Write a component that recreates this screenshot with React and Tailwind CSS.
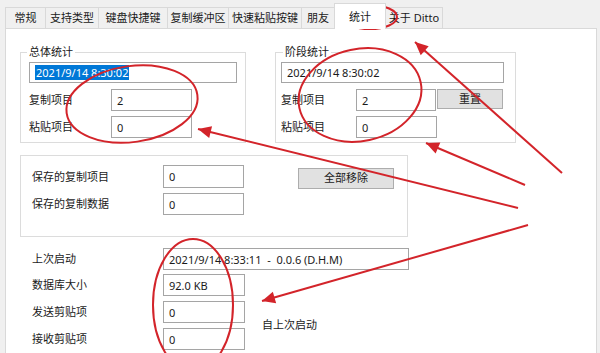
import React from 'react';

const FONT = { fontFamily: '"Noto Sans", "Noto Sans CJK SC", sans-serif' };

const TABS = [
  { label: '常规', w: 'w-[41px]' },
  { label: '支持类型', w: 'w-[54px]' },
  { label: '键盘快捷键', w: 'w-[70px]' },
  { label: '复制缓冲区', w: 'w-[62px]' },
  { label: '快速粘贴按键', w: 'w-[74px]' },
  { label: '朋友', w: 'w-[34px]' },
  { label: '统计', w: 'w-[52px]', active: true },
  { label: '关于 Ditto', w: 'w-[58px]' },
];

const RED = '#d3242a';

// arrow head: returns polygon points for a line ending at (x2, y2)
function head(x1, y1, x2, y2, len = 13, half = 6) {
  const dx = x2 - x1;
  const dy = y2 - y1;
  const d = Math.hypot(dx, dy);
  const ux = dx / d;
  const uy = dy / d;
  const bx = x2 - ux * len;
  const by = y2 - uy * len;
  return `${x2},${y2} ${bx - uy * half},${by + ux * half} ${bx + uy * half},${by - ux * half}`;
}

const ARROWS = [
  [562, 173, 415, 42],
  [518, 208, 198, 129],
  [525, 185, 426, 143],
  [528, 225, 262, 301],
];

function Field({ w, h = 'h-[22px]', children, className = '' }) {
  return (
    <div className={`${w} ${h} border border-[#a5a5a5] bg-white flex items-center pl-[5px] text-[11px] text-[#1a1a1a] leading-none shrink-0 ${className}`}>
      {children}
    </div>
  );
}

function Button({ w, h, children, className = '' }) {
  return (
    <div className={`${w} ${h} border border-[#adadad] bg-[#e1e1e1] flex items-center justify-center text-[11px] text-[#1a1a1a] shrink-0 ${className}`}>
      {children}
    </div>
  );
}

function Annotations() {
  return (
    <svg className="absolute inset-0 pointer-events-none" width="600" height="353" viewBox="0 0 600 353">
      <g fill="none" stroke={RED} strokeWidth="2">
        <ellipse cx="370" cy="17" rx="27" ry="12" />
        <ellipse cx="132" cy="104" rx="66" ry="38" transform="rotate(-8 132 104)" />
        <ellipse cx="360" cy="95" rx="62" ry="46" transform="rotate(-12 360 95)" />
        <ellipse cx="193" cy="305" rx="40" ry="66" />
        {ARROWS.map(([x1, y1, x2, y2], i) => (
          <line key={i} x1={x1} y1={y1} x2={x2} y2={y2} />
        ))}
      </g>
      <g fill={RED}>
        {ARROWS.map(([x1, y1, x2, y2], i) => (
          <polygon key={i} points={head(x1, y1, x2, y2)} />
        ))}
      </g>
    </svg>
  );
}

export default function App() {
  return (
    <div className="relative w-[600px] h-[353px] overflow-hidden bg-[#f0f0f0]" style={FONT}>
      {/* tab strip */}
      <div className="flex items-end h-[28px] pl-[5px]">
        {TABS.map(t =>
          t.active ? (
            <div
              key={t.label}
              className={`${t.w} h-[26px] -ml-px mb-[-1px] relative z-10 bg-white border border-b-0 border-[#d9d9d9] flex items-start justify-center pt-[5px] text-[11px] text-[#1a1a1a]`}
            >
              {t.label}
            </div>
          ) : (
            <div
              key={t.label}
              className={`${t.w} h-[21px] -ml-px first:ml-0 bg-[#f0f0f0] border border-b-0 border-[#d9d9d9] flex items-center justify-center text-[11px] text-[#1a1a1a] whitespace-nowrap`}
            >
              {t.label}
            </div>
          )
        )}
      </div>

      {/* panel */}
      <div className="ml-[5px] w-[592px] h-[340px] bg-white border border-[#d9d9d9] pl-[14px]">
        <div className="flex gap-[29px] mt-[16px]">
          {/* 总体统计 */}
          <fieldset className="w-[226px] h-[98px] border border-[#dcdcdc] pl-[8px] pt-[3px]">
            <legend className="-ml-[2px] px-[2px] text-[11px] leading-[14px] text-[#1a1a1a]">总体统计</legend>
            <Field w="w-[208px]" h="h-[21px]" className="border-[#0078d7] pl-[3px]">
              <span className="bg-[#0078d7] text-white px-[1px] py-[2px]">2021/9/14 8:30:02</span>
            </Field>
            <div className="flex items-center mt-[6px]">
              <span className="w-[82px] text-[11px] text-[#1a1a1a]">复制项目</span>
              <Field w="w-[81px]">2</Field>
            </div>
            <div className="flex items-center mt-[5px]">
              <span className="w-[82px] text-[11px] text-[#1a1a1a]">粘贴项目</span>
              <Field w="w-[81px]">0</Field>
            </div>
          </fieldset>

          {/* 阶段统计 */}
          <fieldset className="w-[241px] h-[98px] border border-[#dcdcdc] pl-[5px] pt-[3px]">
            <legend className="ml-[2px] px-[2px] text-[11px] leading-[14px] text-[#1a1a1a]">阶段统计</legend>
            <Field w="w-[223px]" h="h-[21px]">2021/9/14 8:30:02</Field>
            <div className="flex items-start mt-[6px]">
              <span className="w-[75px] text-[11px] text-[#1a1a1a] leading-[22px]">复制项目</span>
              <Field w="w-[80px]">2</Field>
              <Button w="w-[66px]" h="h-[20px]" className="ml-[1px]">重置</Button>
            </div>
            <div className="flex items-center mt-[5px]">
              <span className="w-[75px] text-[11px] text-[#1a1a1a]">粘贴项目</span>
              <Field w="w-[81px]">0</Field>
            </div>
          </fieldset>
        </div>

        {/* 保存的 */}
        <div className="w-[388px] h-[82px] mt-[12px] border border-[#dcdcdc] pl-[11px] pt-[9px]">
          <div className="flex items-start">
            <span className="w-[131px] text-[11px] text-[#1a1a1a] leading-[23px]">保存的复制项目</span>
            <Field w="w-[81px]" h="h-[23px]">0</Field>
            <Button w="w-[96px]" h="h-[21px]" className="ml-[54px] mt-[3px]">全部移除</Button>
          </div>
          <div className="flex items-center mt-[4px]">
            <span className="w-[131px] text-[11px] text-[#1a1a1a]">保存的复制数据</span>
            <Field w="w-[81px]">0</Field>
          </div>
        </div>

        {/* lower */}
        <div className="pl-[12px] mt-[11px]">
          <div className="flex items-center">
            <span className="w-[131px] text-[11px] text-[#1a1a1a]">上次启动</span>
            <Field w="w-[246px]" className="whitespace-pre">2021/9/14 8:33:11  -  0.0.6 (D.H.M)</Field>
          </div>
          <div className="flex items-center mt-[4px]">
            <span className="w-[131px] text-[11px] text-[#1a1a1a]">数据库大小</span>
            <Field w="w-[82px]">92.0 KB</Field>
          </div>
          <div className="flex items-center mt-[5px]">
            <div>
              <div className="flex items-center">
                <span className="w-[131px] text-[11px] text-[#1a1a1a]">发送剪贴项</span>
                <Field w="w-[82px]">0</Field>
              </div>
              <div className="flex items-center mt-[5px]">
                <span className="w-[131px] text-[11px] text-[#1a1a1a]">接收剪贴项</span>
                <Field w="w-[82px]">0</Field>
              </div>
            </div>
            <span className="ml-[17px] text-[11px] text-[#1a1a1a]">自上次启动</span>
          </div>
        </div>
      </div>

      <Annotations />
    </div>
  );
}
